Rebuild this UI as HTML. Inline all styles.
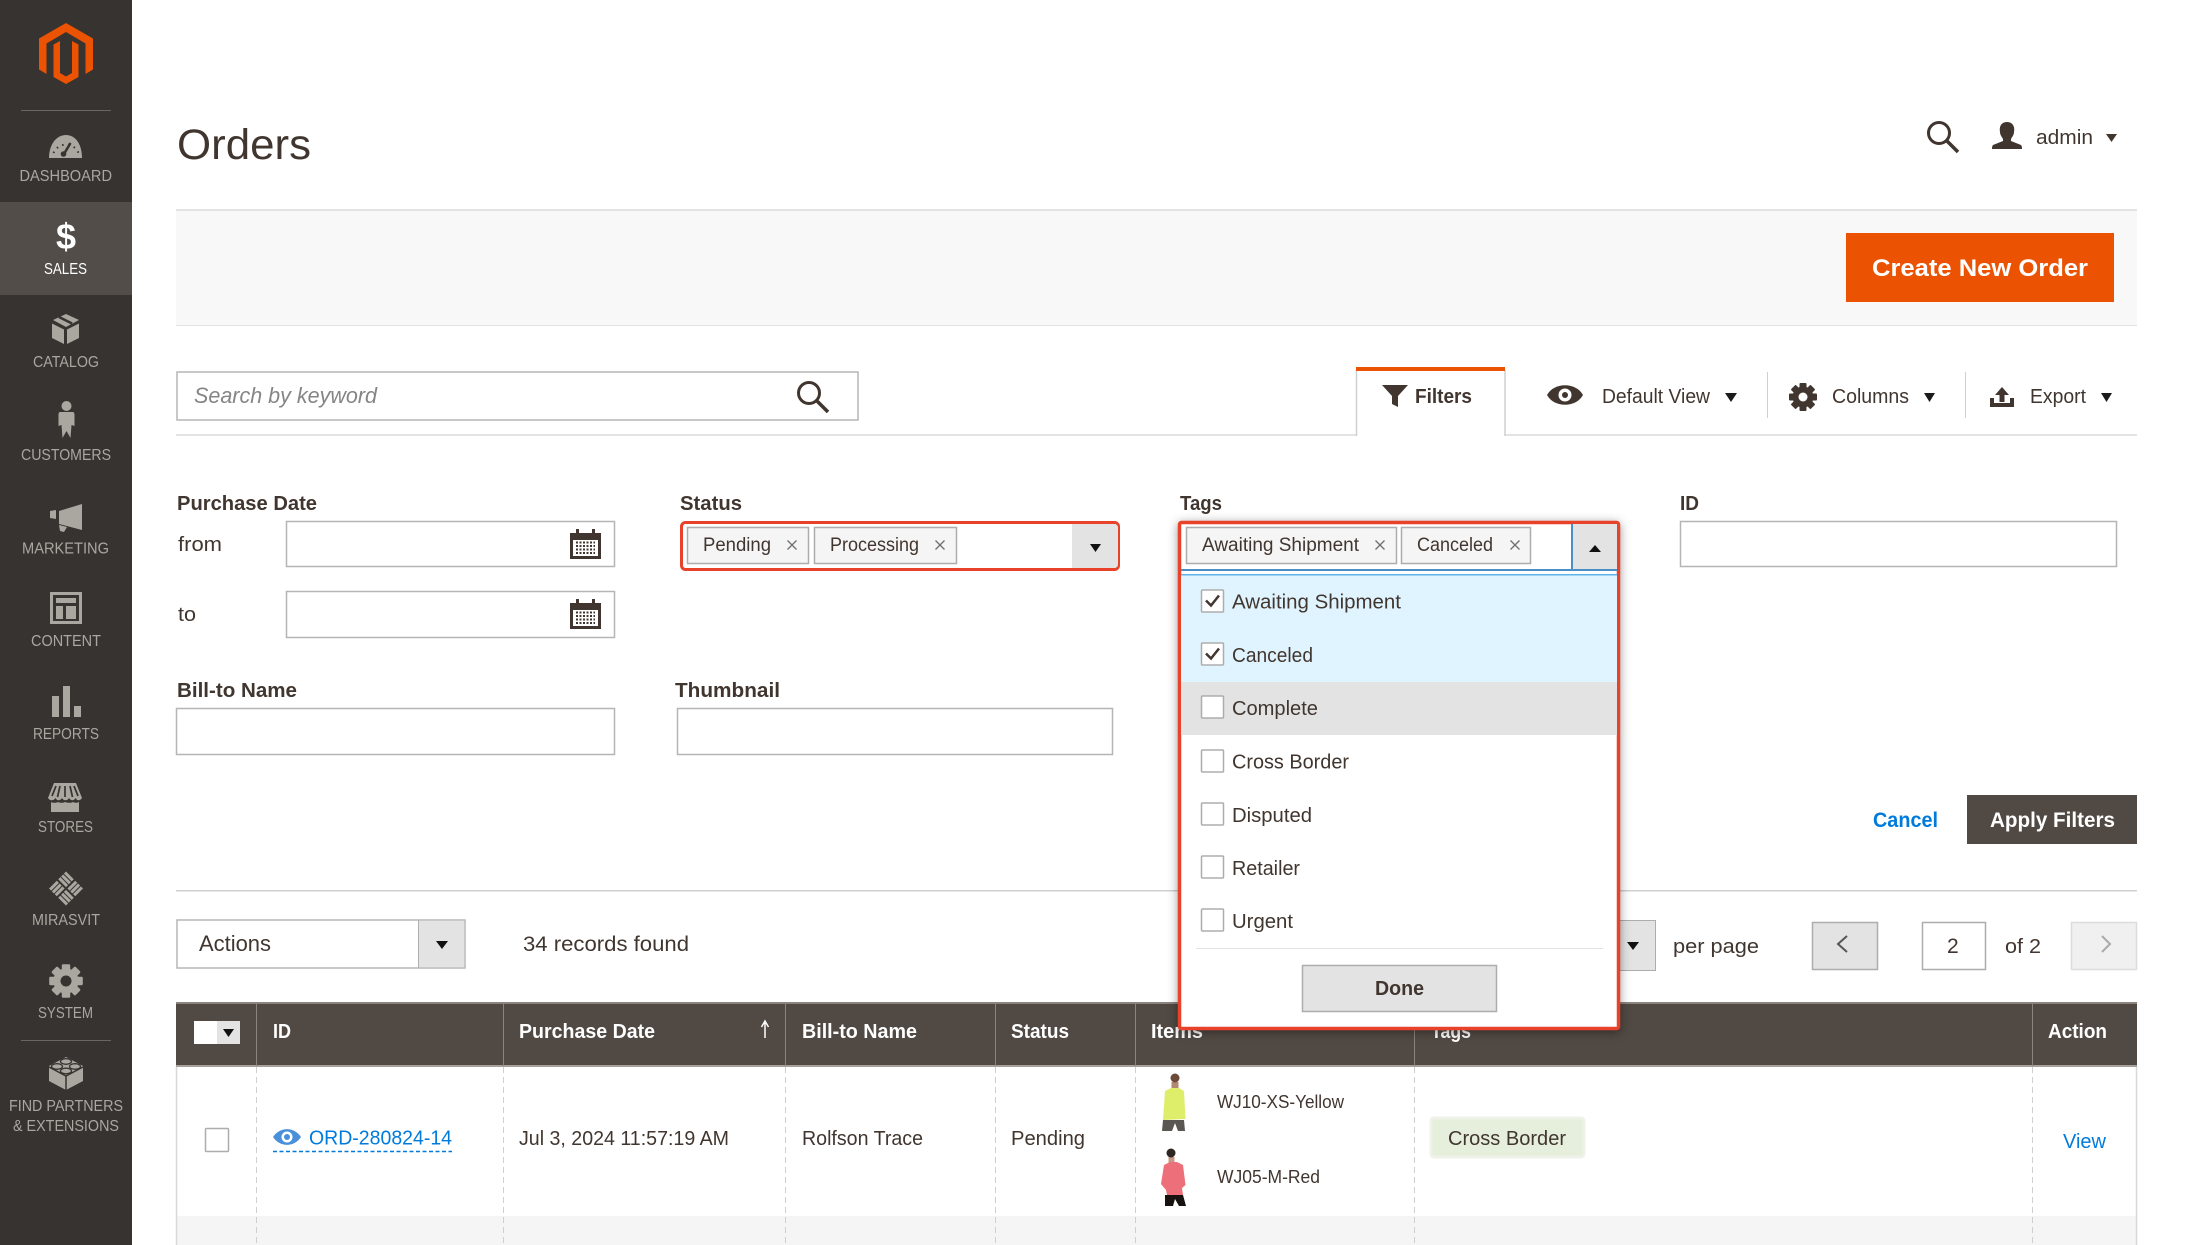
<!DOCTYPE html>
<html lang="en"><head><meta charset="utf-8"><title>Orders</title>
<style>
html,body{margin:0;padding:0;background:#fff;width:2205px;height:1245px;overflow:hidden}
svg{display:block;position:absolute;left:0;top:0}
text{font-family:"Liberation Sans",sans-serif;fill:#41362f}
.s{font-size:15.5px;fill:#aaa6a0}
.r{font-size:20px}
.b{font-size:20px;font-weight:700}
.w{font-size:20px;font-weight:700;fill:#fff}
.l{fill:#007bdb}
</style></head><body>
<svg width="2205" height="1245" viewBox="0 0 2205 1245" xmlns="http://www.w3.org/2000/svg">
<defs>
<g id="gear"><circle r="10.500" fill="currentColor"/>
<rect x="-3.500" y="-14" width="7" height="28" rx="1" fill="currentColor"/>
<rect x="-3.500" y="-14" width="7" height="28" rx="1" fill="currentColor" transform="rotate(45)"/>
<rect x="-3.500" y="-14" width="7" height="28" rx="1" fill="currentColor" transform="rotate(90)"/>
<rect x="-3.500" y="-14" width="7" height="28" rx="1" fill="currentColor" transform="rotate(135)"/></g>
<g id="cal"><rect x="0" y="4" width="31" height="26" fill="#41362f"/><rect x="3" y="11" width="25" height="16" fill="#fff"/>
<rect x="6" y="0" width="3" height="8" fill="#41362f"/><rect x="22" y="0" width="3" height="8" fill="#41362f"/>
<path d="M6 13.500h19M6 17h19M6 20.500h19M6 24h19" stroke="#41362f" stroke-width="2" stroke-dasharray="2 1.500"/></g>
<g id="xm"><path d="M-4.500 -4.500L4.500 4.500M4.500 -4.500L-4.500 4.500" stroke="#6f6f6f" stroke-width="1.300" fill="none"/></g>
</defs>

<!-- sidebar -->
<rect width="132" height="1245" fill="#373330"/>
<rect y="202" width="132" height="93" fill="#524d49"/>
<path d="M66 23L93 38.500V69.500L85.500 74V43.500L66 32L46.500 43.500V74L39 69.500V38.500Z" fill="#eb5202"/>
<path d="M66 84L53.500 77V44.500L60 41V73L66 76.500L72 73V41L78.500 44.500V77Z" fill="#eb5202"/>
<rect x="21" y="110" width="90" height="1" fill="#6b6662"/>
<g fill="#aaa6a0">
<!-- dashboard -->
<path d="M49 158C49 145 56 135 66 135C76 135 82 145 82 158Z"/>
<!-- catalog -->
<path d="M66 314L79 320L66 327L53 320Z"/>
<path d="M52 323.500L64 329.500V344L52 338ZM79 323.500L67 329.500V344L79 338Z"/>
<!-- customers -->
<circle cx="66.500" cy="406" r="5"/>
<path d="M60.500 412H72.500C74 412 74.500 413 74.500 415V426L71.500 425L70.500 438L66.500 431L62.500 438L61.500 425L58.500 426V415C58.500 413 59 412 60.500 412Z"/>
<!-- marketing -->
<path d="M59 511L82 504V530L59 524Z"/><path d="M50 511L56 510V519L50 518Z"/><path d="M59 525L67 527L64 532L60 531Z"/>
<!-- reports -->
<rect x="52" y="696" width="7" height="21"/><rect x="63" y="686" width="7" height="31"/><rect x="74" y="706" width="7" height="11"/>
<!-- stores -->
<path d="M54 783H76L82 798C80 801 77 801 75.500 798C74 801 71 801 69 798C67.500 801 63.500 801 62 798C60 801 57 801 55.500 798C53.500 801 50 801 48 798Z"/>
<path d="M51 802C53 803 56 803 58 802C60 803 63 803 65 802C68 803 71 803 73 802C75 803 77 803 79 802V812H51Z"/>
</g>
<path d="M60 786L57.500 797M65 786V797M70 786L72.500 797M56 786L52 796M74 786L78 796" stroke="#373330" stroke-width="1.700" fill="none"/>
<path d="M70.500 143L64 154" stroke="#373330" stroke-width="2.500"/><circle cx="63.500" cy="154" r="2.800" fill="#373330"/>
<path d="M53.500 153A13.500 13.500 0 0 1 78.500 153" stroke="#373330" stroke-width="2" stroke-dasharray="1.500 4.500" fill="none"/>
<path d="M59 317L72 323.500" stroke="#373330" stroke-width="2.500"/>
<path d="M51.500 593.500H80.500V622.500H51.500Z" fill="none" stroke="#aaa6a0" stroke-width="3"/>
<g fill="#aaa6a0"><rect x="56" y="598" width="20" height="5"/><rect x="56" y="606" width="7" height="13"/><rect x="66" y="606" width="10" height="13"/></g>
<g transform="translate(66 888.500) rotate(45)" stroke="#aaa6a0" stroke-width="3" fill="none">
<path d="M-12 -10.500H-1M-12 -6.500H-1M-12 -2.500H-1"/>
<path d="M1 10.500H12M1 6.500H12M1 2.500H12"/>
<path d="M2.500 -12V-1M6.500 -12V-1M10.500 -12V-1"/>
<path d="M-2.500 12V1M-6.500 12V1M-10.500 12V1"/>
</g>
<g style="color:#aaa6a0" transform="translate(66 981) scale(1.200)"><use href="#gear"/></g>
<circle cx="66" cy="981" r="5.500" fill="#373330"/>
<rect x="21" y="1040" width="90" height="1" fill="#6b6662"/>
<path d="M66 1057L83 1066V1081L66 1090L49 1081V1066Z" fill="#aaa6a0"/>
<path d="M49 1067L66 1076L83 1067M66 1076V1090" stroke="#373330" stroke-width="1.500" fill="none"/>
<g fill="none" stroke="#373330" stroke-width="1.300"><ellipse cx="66" cy="1061.500" rx="5.500" ry="2.800"/><ellipse cx="57" cy="1066.500" rx="5.500" ry="2.800"/><ellipse cx="75" cy="1066.500" rx="5.500" ry="2.800"/><ellipse cx="66" cy="1071" rx="5.500" ry="2.800"/></g>
<text x="56" y="249" font-size="36" font-weight="700" style="fill:#fff">$</text>

<text class="s" x="19.500" y="181" textLength="92.500" lengthAdjust="spacingAndGlyphs">DASHBOARD</text>
<text class="s" x="44" y="274" textLength="43" lengthAdjust="spacingAndGlyphs" style="fill:#fff">SALES</text>
<text class="s" x="33" y="367" textLength="66" lengthAdjust="spacingAndGlyphs">CATALOG</text>
<text class="s" x="21" y="460" textLength="90" lengthAdjust="spacingAndGlyphs">CUSTOMERS</text>
<text class="s" x="22" y="553.500" textLength="87" lengthAdjust="spacingAndGlyphs">MARKETING</text>
<text class="s" x="31" y="646" textLength="70" lengthAdjust="spacingAndGlyphs">CONTENT</text>
<text class="s" x="33" y="739" textLength="66" lengthAdjust="spacingAndGlyphs">REPORTS</text>
<text class="s" x="38" y="832" textLength="55" lengthAdjust="spacingAndGlyphs">STORES</text>
<text class="s" x="32" y="925" textLength="68" lengthAdjust="spacingAndGlyphs">MIRASVIT</text>
<text class="s" x="38" y="1018" textLength="55" lengthAdjust="spacingAndGlyphs">SYSTEM</text>
<text class="s" x="9" y="1111" textLength="114" lengthAdjust="spacingAndGlyphs">FIND PARTNERS</text>
<text class="s" x="13" y="1131" textLength="106" lengthAdjust="spacingAndGlyphs">&amp; EXTENSIONS</text>

<!-- header -->
<text x="177" y="159" font-size="43" textLength="134" lengthAdjust="spacingAndGlyphs">Orders</text>
<circle cx="1939" cy="133" r="10.500" fill="none" stroke="#41362f" stroke-width="3"/>
<path d="M1947 141L1958 152" stroke="#41362f" stroke-width="3.500"/>
<path d="M2007 122C2001 122 1999 127 2000 132C2000 135 2002 137 2003 139V141L1993 145C1992 146 1992 148 1992 149H2022C2022 148 2022 146 2021 145L2011 141V139C2012 137 2014 135 2014 132C2015 127 2013 122 2007 122Z" fill="#41362f"/>
<text class="r" x="2036" y="144" textLength="57" lengthAdjust="spacingAndGlyphs">admin</text>
<path d="M2106 134H2117L2111.500 142Z" fill="#41362f"/>

<!-- page actions -->
<rect x="176" y="209" width="1961" height="116" fill="#f8f8f8"/>
<rect x="176" y="209" width="1961" height="2" fill="#e3e3e3"/>
<rect x="176" y="325" width="1961" height="1" fill="#e3e3e3"/>
<rect x="1846" y="233" width="268" height="69" fill="#eb5202"/>
<text x="1872" y="276" font-size="24" font-weight="700" style="fill:#fff" textLength="216" lengthAdjust="spacingAndGlyphs">Create New Order</text>

<!-- search row -->
<rect x="177" y="372" width="681" height="48" fill="#fff" stroke="#b5b5b5" stroke-width="1.500"/>
<text x="194" y="403" font-size="22" font-style="italic" style="fill:#858585" textLength="183" lengthAdjust="spacingAndGlyphs">Search by keyword</text>
<circle cx="809" cy="393" r="10.500" fill="none" stroke="#41362f" stroke-width="3"/>
<path d="M817 401L828 412" stroke="#41362f" stroke-width="3.500"/>
<rect x="176" y="434" width="1180" height="2" fill="#e3e3e3"/>
<rect x="1505" y="434" width="632" height="2" fill="#e3e3e3"/>
<path d="M1356.500 436V370M1505 436V370" stroke="#d0d0d0" stroke-width="1.500" fill="none"/>
<rect x="1356" y="367" width="149" height="4" fill="#eb5202"/>
<path d="M1382 385H1408L1398 396V407L1392 404V396Z" fill="#41362f"/>
<text class="b" x="1415" y="403" textLength="57" lengthAdjust="spacingAndGlyphs">Filters</text>
<path d="M1547 395C1554 382 1576 382 1583 395C1576 408 1554 408 1547 395Z" fill="#41362f"/>
<circle cx="1565" cy="395" r="6.500" fill="#fff"/><circle cx="1565" cy="395" r="3" fill="#41362f"/>
<text class="r" x="1602" y="403" textLength="108" lengthAdjust="spacingAndGlyphs">Default View</text>
<path d="M1725 393H1737L1731 402Z" fill="#1a1a1a"/>
<rect x="1767" y="372" width="1" height="46" fill="#d0d0d0"/>
<g style="color:#41362f" transform="translate(1803 397)"><use href="#gear"/></g>
<circle cx="1803" cy="397" r="4.500" fill="#fff"/>
<text class="r" x="1832" y="403" textLength="77" lengthAdjust="spacingAndGlyphs">Columns</text>
<path d="M1924 393H1935L1929.500 402Z" fill="#1a1a1a"/>
<rect x="1965" y="372" width="1" height="46" fill="#d0d0d0"/>
<path d="M2002 387L2009 395H2004.500V402H1999.500V395H1995ZM1990 398H1994V403H2010V398H2014V407H1990Z" fill="#41362f"/>
<text class="r" x="2030" y="403" textLength="56" lengthAdjust="spacingAndGlyphs">Export</text>
<path d="M2101 393H2112L2106.500 402Z" fill="#1a1a1a"/>

<!-- filters -->
<text class="b" x="177" y="510" textLength="140" lengthAdjust="spacingAndGlyphs">Purchase Date</text>
<text class="r" x="178" y="551" textLength="44" lengthAdjust="spacingAndGlyphs">from</text>
<text class="r" x="178" y="621" textLength="18" lengthAdjust="spacingAndGlyphs">to</text>
<g fill="#fff" stroke="#b5b5b5" stroke-width="1.500">
<rect x="286.500" y="521.500" width="328" height="45"/>
<rect x="286.500" y="591.500" width="328" height="46"/>
<rect x="176.500" y="708.500" width="438" height="46"/>
<rect x="677.500" y="708.500" width="435" height="46"/>
<rect x="1680.500" y="521.500" width="436" height="45"/>
</g>
<use href="#cal" x="570" y="529"/><use href="#cal" x="570" y="599"/>
<text class="b" x="680" y="510" textLength="62" lengthAdjust="spacingAndGlyphs">Status</text>
<text class="b" x="177" y="697" textLength="120" lengthAdjust="spacingAndGlyphs">Bill-to Name</text>
<text class="b" x="675" y="697" textLength="105" lengthAdjust="spacingAndGlyphs">Thumbnail</text>
<text class="b" x="1180" y="510" textLength="42" lengthAdjust="spacingAndGlyphs">Tags</text>
<text class="b" x="1680" y="510" textLength="19" lengthAdjust="spacingAndGlyphs">ID</text>

<!-- status -->
<rect x="681.500" y="522.500" width="437" height="47" rx="4" fill="#fff" stroke="#e8432a" stroke-width="3"/>
<path d="M1072 524H1114Q1118 524 1118 528V564Q1118 568 1114 568H1072Z" fill="#e3e3e3"/>
<path d="M1090 544H1101L1095.500 552Z" fill="#111"/>
<g fill="#f5f5f5" stroke="#adadad" stroke-width="1.500">
<rect x="687.500" y="527.500" width="121" height="36"/>
<rect x="814.500" y="527.500" width="142" height="36"/>
</g>
<text x="703" y="551" font-size="19" textLength="68" lengthAdjust="spacingAndGlyphs">Pending</text>
<use href="#xm" x="792" y="545"/>
<text x="830" y="551" font-size="19" textLength="89" lengthAdjust="spacingAndGlyphs">Processing</text>
<use href="#xm" x="940" y="545"/>

<!-- actions row -->
<rect x="176" y="890" width="1961" height="1.500" fill="#d0d0d0"/>
<rect x="177" y="920" width="288" height="48" fill="#fff" stroke="#b5b5b5" stroke-width="1.500"/>
<rect x="418" y="921" width="46" height="46" fill="#e3e3e3"/><rect x="418" y="920" width="1" height="48" fill="#adadad"/>
<path d="M436 941H448L442 949Z" fill="#111"/>
<text x="199" y="951" font-size="22" textLength="72" lengthAdjust="spacingAndGlyphs">Actions</text>
<text x="523" y="951" font-size="21" textLength="166" lengthAdjust="spacingAndGlyphs">34 records found</text>

<text x="1873" y="827" font-size="21" font-weight="700" class="l" textLength="65" lengthAdjust="spacingAndGlyphs">Cancel</text>
<rect x="1967" y="795" width="170" height="49" fill="#514943"/>
<text x="1990" y="827" font-size="21" font-weight="700" style="fill:#fff" textLength="125" lengthAdjust="spacingAndGlyphs">Apply Filters</text>

<rect x="1600" y="920.500" width="55.500" height="50" fill="#e3e3e3" stroke="#adadad"/>
<path d="M1627 942H1639L1633 950Z" fill="#111"/>
<text class="r" x="1673" y="953" textLength="86" lengthAdjust="spacingAndGlyphs">per page</text>
<rect x="1812.500" y="922.500" width="65" height="47" fill="#e3e3e3" stroke="#adadad" stroke-width="1.500"/>
<path d="M1847 936L1838 944L1847 952" fill="none" stroke="#555" stroke-width="2"/>
<rect x="1922.500" y="922.500" width="63" height="47" fill="#fff" stroke="#adadad" stroke-width="1.500"/>
<text x="1947" y="953" font-size="21">2</text>
<text class="r" x="2005" y="953" textLength="36" lengthAdjust="spacingAndGlyphs">of 2</text>
<rect x="2071.500" y="922.500" width="65" height="47" fill="#f0f0f0" stroke="#dcdcdc" stroke-width="1.500"/>
<path d="M2102 936L2110 944L2102 952" fill="none" stroke="#aaa" stroke-width="2"/>

<!-- table -->
<rect x="176" y="1066" width="1961" height="150" fill="#fff"/>
<rect x="176" y="1216" width="1961" height="29" fill="#f5f5f5"/>
<path d="M176.500 1066V1245M2136.500 1066V1245" stroke="#d8d8d8" stroke-width="1.500"/>
<path d="M256.500 1067V1245M503.500 1067V1245M785.500 1067V1245M995.500 1067V1245M1135.500 1067V1245M1414.500 1067V1245M2032.500 1067V1245" stroke="#cfcfcf" stroke-dasharray="6 4" fill="none"/>
<rect x="176" y="1002" width="1961" height="64" fill="#514943"/>
<rect x="176" y="1002" width="1961" height="2" fill="#8a837e"/>
<rect x="176" y="1065" width="1961" height="2" fill="#a6a09b"/>
<path d="M256.500 1003V1066M503.500 1003V1066M785.500 1003V1066M995.500 1003V1066M1135.500 1003V1066M1414.500 1003V1066M2032.500 1003V1066" stroke="#8a837e" fill="none"/>
<rect x="194" y="1021" width="23" height="23" fill="#fff"/><rect x="217" y="1021" width="23" height="23" fill="#e3e3e3"/>
<path d="M223 1029H234L228.500 1037Z" fill="#111"/>
<text class="w" x="273" y="1038" textLength="18" lengthAdjust="spacingAndGlyphs">ID</text>
<text class="w" x="519" y="1038" textLength="136" lengthAdjust="spacingAndGlyphs">Purchase Date</text>
<path d="M765 1038V1023M761.500 1027L765 1021L768.500 1027" stroke="#fff" stroke-width="1.500" fill="none"/>
<text class="w" x="802" y="1038" textLength="115" lengthAdjust="spacingAndGlyphs">Bill-to Name</text>
<text class="w" x="1011" y="1038" textLength="58" lengthAdjust="spacingAndGlyphs">Status</text>
<text class="w" x="1151" y="1038" textLength="52" lengthAdjust="spacingAndGlyphs">Items</text>
<text class="w" x="1431" y="1038" textLength="40" lengthAdjust="spacingAndGlyphs">Tags</text>
<text class="w" x="2048" y="1038" textLength="59" lengthAdjust="spacingAndGlyphs">Action</text>

<rect x="205.500" y="1128.500" width="23" height="23" rx="1" fill="#fff" stroke="#adadad" stroke-width="1.500"/>
<path d="M273 1137C280 1126.500 294 1126.500 301 1137C294 1147.500 280 1147.500 273 1137Z" fill="#4a90d9"/>
<circle cx="287" cy="1137" r="5.500" fill="#fff"/><circle cx="287" cy="1137" r="3" fill="#4a90d9"/>
<text class="r l" x="309" y="1144.500" textLength="143" lengthAdjust="spacingAndGlyphs">ORD-280824-14</text>
<path d="M273 1151.500H452" stroke="#007bdb" stroke-width="1.500" stroke-dasharray="4 2.500"/>
<text class="r" x="519" y="1145" textLength="210" lengthAdjust="spacingAndGlyphs">Jul 3, 2024 11:57:19 AM</text>
<text class="r" x="802" y="1145" textLength="121" lengthAdjust="spacingAndGlyphs">Rolfson Trace</text>
<text class="r" x="1011" y="1145" textLength="74" lengthAdjust="spacingAndGlyphs">Pending</text>

<!-- product 1 -->
<rect x="1171.500" y="1082" width="7" height="7" fill="#b08a70"/>
<path d="M1165 1091L1171 1088H1179L1184 1091L1185.500 1119L1163 1120Z" fill="#dfee6a"/>
<path d="M1163 1120H1184L1185 1131H1178L1175 1123L1172 1131H1162Z" fill="#5a5651"/>
<circle cx="1175" cy="1078" r="4.500" fill="#6d4a3a"/>
<!-- product 2 -->
<rect x="1168.500" y="1157" width="6" height="6" fill="#c79a83"/>
<path d="M1164 1165L1170 1162H1177L1183 1165L1185.500 1185L1182 1188L1183 1195H1167L1166 1190L1161 1184Z" fill="#ec6f79"/>
<path d="M1165 1195H1183L1186 1206H1179L1175 1199L1173 1206H1165Z" fill="#17120f"/>
<circle cx="1171" cy="1153" r="4.500" fill="#2d2622"/>
<text x="1217" y="1108" font-size="18" textLength="127" lengthAdjust="spacingAndGlyphs">WJ10-XS-Yellow</text>
<text x="1217" y="1183" font-size="18" textLength="103" lengthAdjust="spacingAndGlyphs">WJ05-M-Red</text>
<rect x="1431" y="1118" width="153" height="39" rx="3" fill="#e5efdc" stroke="#eef2e8" stroke-width="3"/>
<text class="r" x="1448" y="1145" textLength="118" lengthAdjust="spacingAndGlyphs">Cross Border</text>
<text class="r l" x="2063" y="1148" textLength="43" lengthAdjust="spacingAndGlyphs">View</text>

<!-- tags dropdown -->
<rect x="1179.500" y="522.500" width="439" height="506" rx="2" fill="#fff" stroke="#e8432a" stroke-width="3.500" style="filter:drop-shadow(0 2px 5px rgba(0,0,0,.4))"/>
<rect x="1572" y="524" width="45" height="45" fill="#e3e3e3"/>
<rect x="1571" y="524" width="2" height="46" fill="#4a90c8"/>
<rect x="1181" y="569" width="436" height="2" fill="#4a90c8"/>
<rect x="1181" y="574" width="436" height="1.500" fill="#5fb4e8"/>
<path d="M1589 552H1601L1595 545Z" fill="#111"/>
<g fill="#f5f5f5" stroke="#adadad" stroke-width="1.500">
<rect x="1186.500" y="527.500" width="210" height="36"/>
<rect x="1401.500" y="527.500" width="129" height="36"/>
</g>
<text x="1202" y="551" font-size="19" textLength="157" lengthAdjust="spacingAndGlyphs">Awaiting Shipment</text>
<use href="#xm" x="1380" y="545"/>
<text x="1417" y="551" font-size="19" textLength="76" lengthAdjust="spacingAndGlyphs">Canceled</text>
<use href="#xm" x="1515" y="545"/>
<rect x="1181" y="575.500" width="436" height="106.500" fill="#e0f4ff"/>
<rect x="1181" y="682" width="436" height="53" fill="#e3e3e3"/>
<g fill="#fff" stroke="#adadad" stroke-width="1.500">
<rect x="1201.500" y="590" width="22" height="22" rx="1"/>
<rect x="1201.500" y="643" width="22" height="22" rx="1"/>
<rect x="1201.500" y="696" width="22" height="22" rx="1"/>
<rect x="1201.500" y="750" width="22" height="22" rx="1"/>
<rect x="1201.500" y="803" width="22" height="22" rx="1"/>
<rect x="1201.500" y="856" width="22" height="22" rx="1"/>
<rect x="1201.500" y="909" width="22" height="22" rx="1"/>
</g>
<path d="M1206 600.500L1211 605.500L1219 595.500M1206 653.500L1211 658.500L1219 648.500" fill="none" stroke="#41362f" stroke-width="2.500"/>
<text class="r" x="1232" y="608.500" textLength="169" lengthAdjust="spacingAndGlyphs">Awaiting Shipment</text>
<text class="r" x="1232" y="662" textLength="81" lengthAdjust="spacingAndGlyphs">Canceled</text>
<text class="r" x="1232" y="715" textLength="86" lengthAdjust="spacingAndGlyphs">Complete</text>
<text class="r" x="1232" y="768.500" textLength="117" lengthAdjust="spacingAndGlyphs">Cross Border</text>
<text class="r" x="1232" y="822" textLength="80" lengthAdjust="spacingAndGlyphs">Disputed</text>
<text class="r" x="1232" y="875" textLength="68" lengthAdjust="spacingAndGlyphs">Retailer</text>
<text class="r" x="1232" y="928" textLength="61" lengthAdjust="spacingAndGlyphs">Urgent</text>
<rect x="1196" y="948" width="407" height="1" fill="#e3e3e3"/>
<rect x="1302.500" y="965.500" width="194" height="46" fill="#e3e3e3" stroke="#adadad" stroke-width="1.500"/>
<text class="b" x="1375" y="995" textLength="49" lengthAdjust="spacingAndGlyphs">Done</text>
</svg>
</body></html>
